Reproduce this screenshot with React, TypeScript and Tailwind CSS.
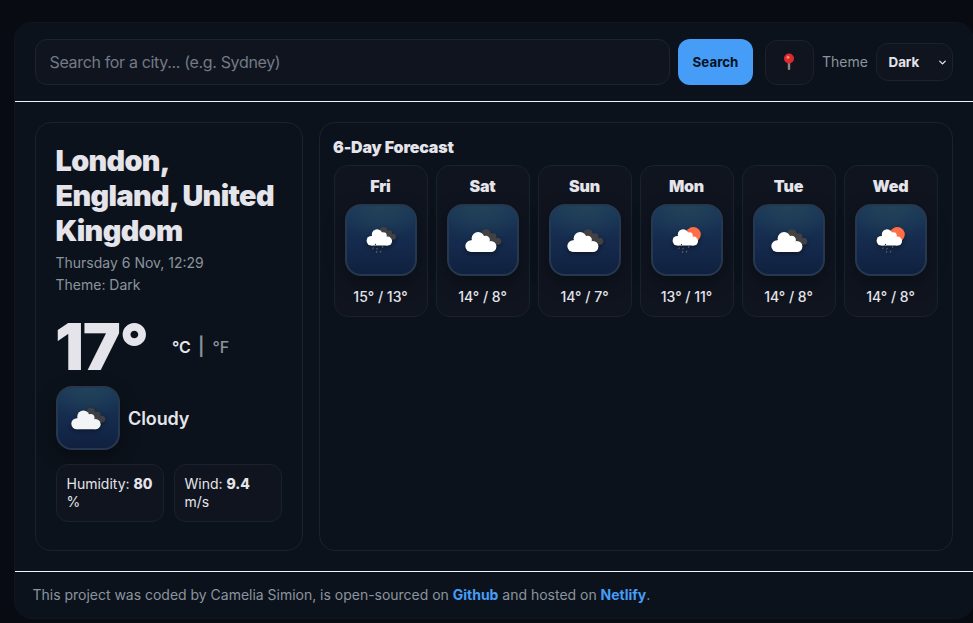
import { FormEvent, useState } from "react";
import clsx from "clsx";
import { ChevronDown } from "lucide-react";

type IconKind = "cloudy" | "rain" | "sunRain";

interface ForecastDay {
  day: string;
  icon: IconKind;
  high: number;
  low: number;
}

const FORECAST: ForecastDay[] = [
  { day: "Fri", icon: "rain", high: 15, low: 13 },
  { day: "Sat", icon: "cloudy", high: 14, low: 8 },
  { day: "Sun", icon: "cloudy", high: 14, low: 7 },
  { day: "Mon", icon: "sunRain", high: 13, low: 11 },
  { day: "Tue", icon: "cloudy", high: 14, low: 8 },
  { day: "Wed", icon: "sunRain", high: 14, low: 8 },
];

function WeatherIcon({ kind, className }: { kind: IconKind; className?: string }) {
  const small = kind !== "cloudy";
  return (
    <svg
      viewBox="1 1 70 70"
      className={clsx("shrink-0 drop-shadow-[0_2px_2px_rgba(0,0,0,0.4)]", className)}
    >
      {kind === "sunRain" && <circle cx="42.3" cy="30.5" r="7.5" fill="#ff6f47" />}
      <g transform={small ? "translate(21.6 25.2) scale(0.82)" : "translate(18.3 28)"}>
        {/* darker cloud behind */}
        {kind !== "sunRain" && (
          <g fill="#424143">
            <circle cx="20.7" cy="2" r="4.8" />
            <circle cx="27.8" cy="4.6" r="3.3" />
            <circle cx="32.4" cy="9.2" r="3.5" />
            <path d="M19 2h8l5 5v5.5h-8z" />
          </g>
        )}
        <g fill="#fff">
          <circle cx="5.9" cy="14.1" r="5.9" />
          <circle cx="12.8" cy="6.5" r="6.5" />
          <circle cx="20.4" cy="7.9" r="4.2" />
          <circle cx="25.6" cy="14.5" r="5.5" />
          <path d="M5.9 8.2h14l5.7 3V20H5.9z" />
        </g>
      </g>
      {small && (
        <>
          <circle cx="30.5" cy="40.4" r="0.6" fill="#333" />
          <path
            d="M28.2 43.8l-.4 1M32.2 44.2l-.4 1M37.8 42.5l-.4 1M31.8 47.5l-.4 1M35.8 47.2l-.4 1"
            stroke="#706f6f"
            strokeWidth="0.9"
            strokeLinecap="round"
          />
        </>
      )}
    </svg>
  );
}

function IconTile({ kind, size }: { kind: IconKind; size: "sm" | "lg" }) {
  return (
    <div
      className={clsx(
        "shrink-0 flex items-center justify-center border-2 border-[#26384f] rounded-2xl shadow-[0_6px_18px_rgba(0,0,0,0.35)] bg-[radial-gradient(70%_50%_at_50%_0%,#234358_0%,transparent_100%),linear-gradient(180deg,#19375a_0%,#14284a_65%,#10213f_100%)]",
        size === "lg" ? "size-18" : "size-16",
      )}
    >
      <WeatherIcon
        kind={kind}
        className={size === "lg" ? "size-[70px]" : "size-[66px] opacity-95"}
      />
    </div>
  );
}

function PinIcon() {
  return (
    <svg width="12" height="18" viewBox="0 0 12 18">
      <rect x="4.8" y="8" width="2.4" height="9" rx="1" fill="#8d8580" />
      <circle cx="6" cy="5.5" r="5" fill="#dc2a2e" />
      <circle cx="5" cy="4.2" r="1.5" fill="#ff8580" />
    </svg>
  );
}

function SearchBar() {
  const [city, setCity] = useState("");

  const handleSubmit = (e: FormEvent<HTMLFormElement>) => {
    e.preventDefault();
    setCity("");
  };

  return (
    <header className="h-[79px] shrink-0 flex items-center pl-5 pr-5 pb-px border-b border-[#f2f3f5]">
      <form className="flex-1 flex gap-2" onSubmit={handleSubmit}>
        <input
          className="flex-1 min-w-0 h-[46px] px-[13.5px] rounded-xl border border-[#1c252e] bg-[#0f141f] text-base tracking-[-0.34px] text-[#e4e4ea] placeholder:text-[#747a85] outline-none"
          placeholder="Search for a city... (e.g. Sydney)"
          value={city}
          onChange={(e) => setCity(e.target.value)}
        />
        <button
          type="submit"
          className="w-[75px] h-[46px] pt-0.5 rounded-xl bg-[#459df7] text-[13.33px] font-bold text-[#08111d]"
        >
          Search
        </button>
      </form>
      <button
        type="button"
        className="ml-3 mt-px w-[49px] h-[45px] pr-0.5 flex items-center justify-center rounded-xl border border-[#1b222d] bg-[#0f141f]"
      >
        <PinIcon />
      </button>
      <span className="ml-2 w-[46px] text-sm text-[#8b949e]">Theme</span>
      <button
        type="button"
        className="ml-2 w-[77px] h-[38px] pt-0.5 pl-[11.5px] pr-1 flex items-center justify-between rounded-xl border border-[#1b222d] bg-[#0f141f] text-[13.33px] font-bold"
      >
        Dark
        <ChevronDown className="size-[11px]" strokeWidth={3} />
      </button>
    </header>
  );
}

function CurrentWeather() {
  return (
    <section className="w-[268px] shrink-0 rounded-2xl border border-[#1b222d] p-5">
      <h1 className="-ml-[0.5px] text-[28.8px] leading-[35px] tracking-[-0.65px] font-black">
        London, England, United Kingdom
      </h1>
      <div className="mt-1 -ml-[0.5px] text-sm leading-[22px] text-[#8b949e]">
        <p>Thursday 6 Nov, 12:29</p>
        <p>Theme: Dark</p>
      </div>
      <div className="mt-[19px] flex items-center">
        <span className="-ml-px text-[64px] leading-[64px] tracking-[-1.2px] font-black">17°</span>
        <div className="ml-6 flex items-center gap-2 text-base font-semibold">
          <span>°C</span>
          <span className="-ml-px text-lg leading-7 text-[#8b949e]">|</span>
          <span className="text-[#8b949e] font-medium">°F</span>
        </div>
      </div>
      <div className="mt-[7px] flex items-center gap-2">
        <IconTile kind="cloudy" size="sm" />
        <span className="pt-px text-lg tracking-[-0.1px] font-semibold">Cloudy</span>
      </div>
      <div className="mt-3.5 grid grid-cols-2 gap-2.5 text-sm leading-[18px]">
        <div className="h-[58px] pl-[9.5px] pr-1.5 py-[10px] rounded-xl border border-[#1b222d] bg-[#0f141f]">
          Humidity: <b className="font-extrabold">80</b> %
        </div>
        <div className="h-[58px] pl-[9.5px] pr-1.5 py-[10px] rounded-xl border border-[#1b222d] bg-[#0f141f]">
          Wind: <b className="font-extrabold">9.4</b> m/s
        </div>
      </div>
    </section>
  );
}

function Forecast() {
  return (
    <section className="flex-1 rounded-2xl border border-[#1b222d] px-3.5 pt-3.5">
      <h2 className="-ml-px text-base leading-5 tracking-[-0.15px] font-black">
        6-Day Forecast
      </h2>
      <div className="mt-2 grid grid-cols-6 gap-2">
        {FORECAST.map((item) => (
          <div
            key={item.day}
            className="h-[152px] flex flex-col items-center rounded-[14px] border border-[#1b222d] bg-[#0f141f] pt-2.5"
          >
            <span className="pr-px text-base leading-5 tracking-[-0.15px] font-black">
              {item.day}
            </span>
            <div className="mt-2">
              <IconTile kind={item.icon} size="lg" />
            </div>
            <span className="mt-3 pr-px text-sm leading-[18px] font-medium">
              {item.high}° / {item.low}°
            </span>
          </div>
        ))}
      </div>
    </section>
  );
}

export default function App() {
  return (
    <div className="h-[623px] overflow-hidden bg-[#080b12] pt-[22px] pl-3.5 font-['Inter',sans-serif] text-[#e4e4ea]">
      <div className="w-[960px] h-[597px] flex flex-col rounded-[18px] border border-[#0e161f] bg-[#0c121b]">
        <SearchBar />
        <main className="flex-1 flex gap-4 p-5">
          <CurrentWeather />
          <Forecast />
        </main>
        <footer className="h-[47px] shrink-0 pl-[17.5px] flex items-center border-t border-[#f2f3f5] text-sm text-[#8b949e]">
          <p className="tracking-[-0.015px]">
            This project was coded by Camelia Simion, is open-sourced on{" "}
            <a className="font-bold text-[#459df7]">Github</a> and hosted on{" "}
            <a className="font-bold text-[#459df7]">Netlify</a>.
          </p>
        </footer>
      </div>
    </div>
  );
}
